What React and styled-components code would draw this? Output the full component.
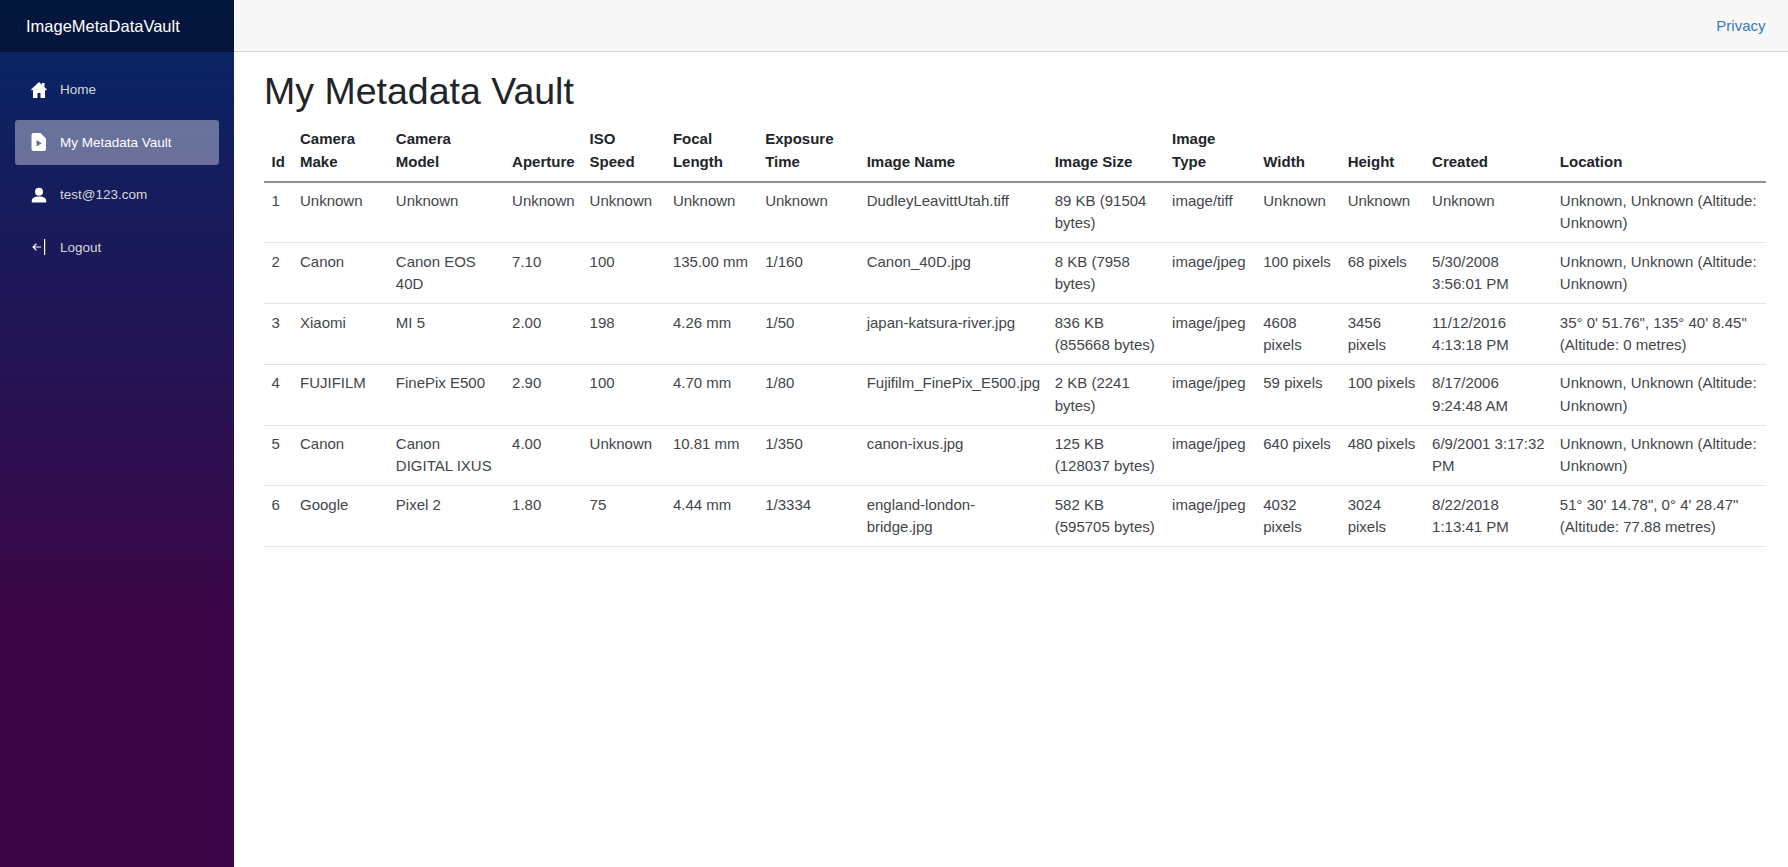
import React from "react";
import styled, { createGlobalStyle } from "styled-components";

const GlobalStyle = createGlobalStyle`
  html, body {
    margin: 0;
    height: 100%;
    background: #fff;
    font-family: "Liberation Sans", Arial, sans-serif;
    font-size: 15px;
    color: #212529;
  }
`;

const Page = styled.div`
  display: flex;
  height: 867px;
  overflow: hidden;
`;

const Sidebar = styled.aside`
  width: 234px;
  flex-shrink: 0;
  background-image: linear-gradient(180deg, #052767 0%, #3a0647 70%);
`;

const Brand = styled.div`
  height: 52px;
  padding-left: 26px;
  display: flex;
  align-items: center;
  background: rgba(0, 0, 0, 0.4);
  color: #fff;
  font-size: 16.5px;
`;

const Nav = styled.nav`
  display: flex;
  flex-direction: column;
  gap: 7.5px;
  padding: 15px 15px 0;
`;

const NavItem = styled.a`
  height: 45px;
  padding-left: 16px;
  display: flex;
  align-items: center;
  gap: 13px;
  border-radius: 3px;
  font-size: 13.5px;
  color: ${(p) => (p.$active ? "#fff" : "#d7d7d7")};
  background: ${(p) => (p.$active ? "rgba(255, 255, 255, 0.37)" : "transparent")};
`;

const NavIcon = styled.svg`
  width: 16px;
  height: 18px;
  fill: #fff;
  flex-shrink: 0;
`;

const Main = styled.main`
  flex: 1;
  min-width: 0;
`;

const TopRow = styled.header`
  height: 51px;
  padding-right: 22.5px;
  display: flex;
  align-items: center;
  justify-content: flex-end;
  background: #f7f7f7;
  border-bottom: 1px solid #d6d5d5;
`;

const PrivacyLink = styled.a`
  color: #337ab7;
`;

const Content = styled.section`
  padding: 17px 22.5px 0 30px;
`;

const Title = styled.h1`
  margin: 0 0 6.5px;
  font-size: 37.5px;
  font-weight: 400;
  line-height: 45px;
`;

const Table = styled.table`
  width: 100%;
  table-layout: fixed;
  border-collapse: collapse;
`;

const HeadCell = styled.th`
  padding: 7.5px;
  text-align: left;
  vertical-align: bottom;
  font-weight: 700;
  line-height: 22.5px;
  border-bottom: 2px solid #8f8f8f;
`;

const Cell = styled.td`
  padding: 7.5px;
  vertical-align: top;
  line-height: 22.375px;
  color: #42464b;
  border-bottom: 1px solid #e4e6e9;
`;

const columns = [
  ["Id", 28.5],
  ["Camera Make", 95.8],
  ["Camera Model", 116.3],
  ["Aperture", 77.5],
  ["ISO Speed", 83.3],
  ["Focal Length", 92.3],
  ["Exposure Time", 101.5],
  ["Image Name", 188],
  ["Image Size", 117.4],
  ["Image Type", 91.2],
  ["Width", 84.4],
  ["Height", 84.4],
  ["Created", 127.8],
  ["Location", 213],
];

const rows = [
  ["1", "Unknown", "Unknown", "Unknown", "Unknown", "Unknown", "Unknown", "DudleyLeavittUtah.tiff", "89 KB (91504 bytes)", "image/tiff", "Unknown", "Unknown", "Unknown", "Unknown, Unknown (Altitude: Unknown)"],
  ["2", "Canon", "Canon EOS 40D", "7.10", "100", "135.00 mm", "1/160", "Canon_40D.jpg", "8 KB (7958 bytes)", "image/jpeg", "100 pixels", "68 pixels", "5/30/2008 3:56:01 PM", "Unknown, Unknown (Altitude: Unknown)"],
  ["3", "Xiaomi", "MI 5", "2.00", "198", "4.26 mm", "1/50", "japan-katsura-river.jpg", "836 KB (855668 bytes)", "image/jpeg", "4608 pixels", "3456 pixels", "11/12/2016 4:13:18 PM", "35° 0' 51.76\", 135° 40' 8.45\" (Altitude: 0 metres)"],
  ["4", "FUJIFILM", "FinePix E500", "2.90", "100", "4.70 mm", "1/80", "Fujifilm_FinePix_E500.jpg", "2 KB (2241 bytes)", "image/jpeg", "59 pixels", "100 pixels", "8/17/2006 9:24:48 AM", "Unknown, Unknown (Altitude: Unknown)"],
  ["5", "Canon", "Canon DIGITAL IXUS", "4.00", "Unknown", "10.81 mm", "1/350", "canon-ixus.jpg", "125 KB (128037 bytes)", "image/jpeg", "640 pixels", "480 pixels", "6/9/2001 3:17:32 PM", "Unknown, Unknown (Altitude: Unknown)"],
  ["6", "Google", "Pixel 2", "1.80", "75", "4.44 mm", "1/3334", "england-london-bridge.jpg", "582 KB (595705 bytes)", "image/jpeg", "4032 pixels", "3024 pixels", "8/22/2018 1:13:41 PM", "51° 30' 14.78\", 0° 4' 28.47\" (Altitude: 77.88 metres)"],
];

const HomeIcon = () => (
  <NavIcon viewBox="0 0 16 18">
    <path d="M8 1 0 8.5l1 1.100 1-.8V17h4.500v-5h3v5H14V8.800l1 .8 1-1.100-2.500-2.300V2H11v1.800z" />
  </NavIcon>
);

const FileIcon = () => (
  <NavIcon viewBox="0 0 16 18">
    <path fillRule="evenodd" d="M2.500 0h7L15 5.500V16a2 2 0 0 1-2 2H2.500a2 2 0 0 1-2-2V2a2 2 0 0 1 2-2zM5.500 7v6.400l5.300-3.200z" />
  </NavIcon>
);

const UserIcon = () => (
  <NavIcon viewBox="0 0 16 18">
    <circle cx="8" cy="5.700" r="4" />
    <path d="M.8 16.500v-1.700C.8 12 4 10.600 8 10.600s7.200 1.400 7.200 4.200v1.700z" />
  </NavIcon>
);

const LogoutIcon = () => (
  <NavIcon viewBox="0 0 16 18">
    <path d="M13 1h1.200v16H13zM5 5.200l.9.9-2.300 2.300H10v1.200H3.600l2.300 2.300-.9.900L1.200 9z" />
  </NavIcon>
);

const navItems = [
  { label: "Home", icon: <HomeIcon /> },
  { label: "My Metadata Vault", icon: <FileIcon />, active: true },
  { label: "test@123.com", icon: <UserIcon /> },
  { label: "Logout", icon: <LogoutIcon /> },
];

const App = () => {
  return (
    <Page>
      <GlobalStyle />
      <Sidebar>
        <Brand>ImageMetaDataVault</Brand>
        <Nav>
          {navItems.map((item) => (
            <NavItem key={item.label} $active={item.active}>
              {item.icon}
              {item.label}
            </NavItem>
          ))}
        </Nav>
      </Sidebar>
      <Main>
        <TopRow>
          <PrivacyLink>Privacy</PrivacyLink>
        </TopRow>
        <Content>
          <Title>My Metadata Vault</Title>
          <Table>
            <colgroup>
              {columns.map(([name, width]) => (
                <col key={name} style={{ width }} />
              ))}
            </colgroup>
            <thead>
              <tr>
                {columns.map(([name]) => (
                  <HeadCell key={name}>{name}</HeadCell>
                ))}
              </tr>
            </thead>
            <tbody>
              {rows.map((row) => (
                <tr key={row[0]}>
                  {row.map((value, i) => (
                    <Cell key={i}>{value}</Cell>
                  ))}
                </tr>
              ))}
            </tbody>
          </Table>
        </Content>
      </Main>
    </Page>
  );
};

export default App;
